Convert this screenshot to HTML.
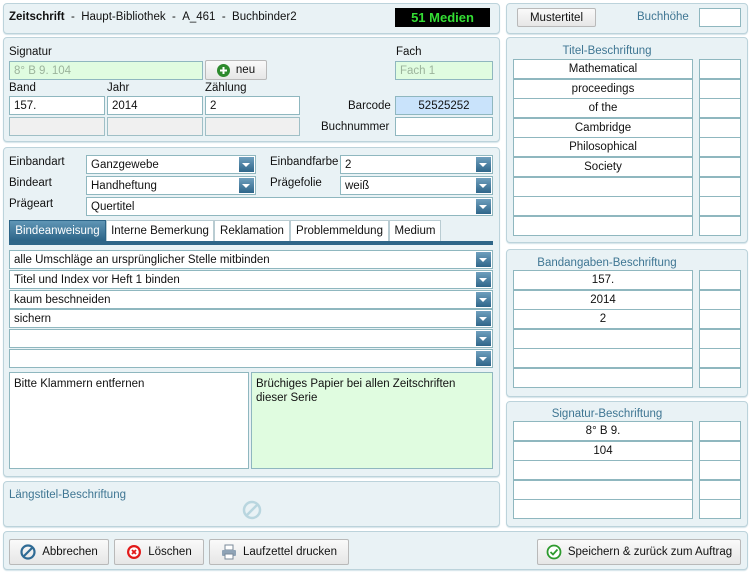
<!DOCTYPE html>
<html><head><meta charset="utf-8"><style>
*{box-sizing:border-box;margin:0;padding:0}
body{width:750px;height:572px;background:#fff;font-family:"Liberation Sans",sans-serif;font-size:11.5px;color:#111;position:relative;overflow:hidden}
.a{position:absolute}
.p{position:absolute;background:#e9f2f5;border:1px solid #bcd3db;border-radius:4px;box-shadow:0 1px 1px #d4e3e8}
.i{position:absolute;background:#fff;border:1px solid #8fb7bf;height:19px;line-height:18px;padding-left:4px;font-size:11.5px;white-space:nowrap;overflow:hidden}
.g{background:#f0f0f0;border-color:#9fbfc6}
.gr{background:#e0fce0;color:#9bb39b}
.l{position:absolute;font-size:11.5px}
.s::after{content:"";position:absolute;right:1px;top:1px;width:15px;height:15px;background:linear-gradient(#6f9fbd,#2f668a)}
.s::before{content:"";position:absolute;right:5px;top:7px;border-left:4px solid transparent;border-right:4px solid transparent;border-top:4px solid #fff;z-index:2}
.b{position:absolute;background:linear-gradient(#fafafa,#e6e6e6);border:1px solid #b9b9b9;border-radius:2px;font-size:11.5px;display:flex;align-items:center;justify-content:center;gap:6px}
.t{position:absolute;height:21px;line-height:21px;background:#fff;border:1px solid #b9ccd2;border-bottom:none;font-size:11.5px;text-align:center}
.c{position:absolute;background:#fff;border:1px solid #8fb7bf;text-align:center;font-size:11.5px;line-height:18px}
.h{position:absolute;color:#3f7693;font-size:11.5px;text-align:center}
</style></head><body>
<div class="p" style="left:3px;top:3px;width:497px;height:31px"></div>
<div class="l" style="left:9px;top:11px"><b>Zeitschrift</b> &nbsp;- &nbsp;Haupt-Bibliothek &nbsp;- &nbsp;A_461 &nbsp;- &nbsp;Buchbinder2</div>
<div class="a" style="left:395px;top:8px;width:95px;height:19px;background:#000;color:#33dd33;font-weight:bold;font-size:13px;text-align:center;line-height:19px">51 Medien</div>
<div class="p" style="left:3px;top:37px;width:497px;height:105px"></div>
<div class="l" style="left:9px;top:46px">Signatur</div>
<div class="i gr" style="left:9px;top:61px;width:194px">8° B 9. 104</div>
<div class="b" style="left:205px;top:60px;width:62px;height:20px"><svg width="13" height="13"><circle cx="6.5" cy="6.5" r="6.5" fill="#2d8a2d"/><path d="M6.5 3v7M3 6.5h7" stroke="#fff" stroke-width="2"/></svg>neu</div>
<div class="l" style="left:396px;top:46px">Fach</div>
<div class="i gr" style="left:395px;top:61px;width:98px">Fach 1</div>
<div class="l" style="left:9px;top:82px">Band</div>
<div class="l" style="left:107px;top:82px">Jahr</div>
<div class="l" style="left:205px;top:82px">Zählung</div>
<div class="i" style="left:9px;top:96px;width:96px">157.</div>
<div class="i" style="left:107px;top:96px;width:96px">2014</div>
<div class="i" style="left:205px;top:96px;width:95px">2</div>
<div class="i g" style="left:9px;top:117px;width:96px"></div>
<div class="i g" style="left:107px;top:117px;width:96px"></div>
<div class="i g" style="left:205px;top:117px;width:95px"></div>
<div class="l" style="left:348px;top:100px">Barcode</div>
<div class="i" style="left:395px;top:96px;width:98px;background:#c9e3fb;text-align:center;padding:0">52525252</div>
<div class="l" style="left:321px;top:121px">Buchnummer</div>
<div class="i" style="left:395px;top:117px;width:98px"></div>
<div class="p" style="left:3px;top:147px;width:497px;height:330px"></div>
<div class="l" style="left:9px;top:156px">Einbandart</div>
<div class="i s" style="left:86px;top:155px;width:170px">Ganzgewebe</div>
<div class="l" style="left:270px;top:156px">Einbandfarbe</div>
<div class="i s" style="left:340px;top:155px;width:153px">2</div>
<div class="l" style="left:9px;top:177px">Bindeart</div>
<div class="i s" style="left:86px;top:176px;width:170px">Handheftung</div>
<div class="l" style="left:270px;top:177px">Prägefolie</div>
<div class="i s" style="left:340px;top:176px;width:153px">weiß</div>
<div class="l" style="left:9px;top:198px">Prägeart</div>
<div class="i s" style="left:86px;top:197px;width:407px">Quertitel</div>
<div class="t" style="left:9px;top:220px;width:97px;background:linear-gradient(#5f95b5,#2c6487);color:#fff;border-color:#2c6487">Bindeanweisung</div>
<div class="t" style="left:106px;top:220px;width:108px">Interne Bemerkung</div>
<div class="t" style="left:214px;top:220px;width:76px">Reklamation</div>
<div class="t" style="left:290px;top:220px;width:99px">Problemmeldung</div>
<div class="t" style="left:389px;top:220px;width:52px">Medium</div>
<div class="a" style="left:9px;top:241px;width:484px;height:4px;background:#2f6688"></div>
<div class="i s" style="left:9px;top:250px;width:484px">alle Umschläge an ursprünglicher Stelle mitbinden</div>
<div class="i s" style="left:9px;top:270px;width:484px">Titel und Index vor Heft 1 binden</div>
<div class="i s" style="left:9px;top:290px;width:484px">kaum beschneiden</div>
<div class="i s" style="left:9px;top:309px;width:484px">sichern</div>
<div class="i s" style="left:9px;top:329px;width:484px"></div>
<div class="i s" style="left:9px;top:349px;width:484px"></div>
<div class="i" style="left:9px;top:372px;width:240px;height:97px;white-space:normal;line-height:14px;padding-top:4px">Bitte Klammern entfernen</div>
<div class="i" style="left:251px;top:372px;width:242px;height:97px;white-space:normal;line-height:14px;padding-top:4px;padding-right:30px;background:#e0fce0">Brüchiges Papier bei allen Zeitschriften dieser Serie</div>
<div class="p" style="left:3px;top:481px;width:497px;height:46px"></div>
<div class="l" style="left:9px;top:489px;color:#3f7693">Längstitel-Beschriftung</div>
<svg class="a" style="left:242px;top:500px" width="20" height="20"><circle cx="10" cy="10" r="8" fill="none" stroke="#b9d6df" stroke-width="2.5"/><path d="M5 15L15 5" stroke="#b9d6df" stroke-width="2.5"/></svg>
<div class="p" style="left:506px;top:3px;width:242px;height:31px"></div>
<div class="b" style="left:517px;top:8px;width:79px;height:19px">Mustertitel</div>
<div class="l" style="left:637px;top:11px;color:#3f7693">Buchhöhe</div>
<div class="i" style="left:699px;top:8px;width:42px"></div>
<div class="p" style="left:506px;top:37px;width:242px;height:206px"></div>
<div class="h" style="left:517px;top:45px;width:180px">Titel-Beschriftung</div>
<div class="p" style="left:506px;top:249px;width:242px;height:148px"></div>
<div class="h" style="left:517px;top:257px;width:180px">Bandangaben-Beschriftung</div>
<div class="p" style="left:506px;top:401px;width:242px;height:126px"></div>
<div class="h" style="left:517px;top:408px;width:180px">Signatur-Beschriftung</div>
<script>
function rows(y,n,vals){var h='';for(var k=0;k<n;k++){var yy=Math.round(y+k*19.6);h+='<div class="c" style="left:513px;top:'+yy+'px;width:180px;height:20px">'+(vals[k]||'')+'</div><div class="c" style="left:699px;top:'+yy+'px;width:42px;height:20px"></div>';}document.write(h);}
rows(59,9,["Mathematical","proceedings","of the","Cambridge","Philosophical","Society"]);
rows(270,6,["157.","2014","2"]);
rows(421,5,["8° B 9.","104"]);
</script>
<div class="p" style="left:3px;top:531px;width:745px;height:39px"></div>
<div class="b" style="left:9px;top:539px;width:100px;height:26px"><svg width="16" height="16"><circle cx="8" cy="8" r="6.5" fill="none" stroke="#2f6b95" stroke-width="2.2"/><path d="M4 12L12 4" stroke="#2f6b95" stroke-width="2.2"/></svg>Abbrechen</div>
<div class="b" style="left:114px;top:539px;width:90px;height:26px"><svg width="16" height="16"><circle cx="8" cy="8" r="7" fill="#e21a1a"/><circle cx="8" cy="8" r="4.8" fill="#fff"/><path d="M6 6l4 4M10 6l-4 4" stroke="#e21a1a" stroke-width="1.8"/></svg>Löschen</div>
<div class="b" style="left:209px;top:539px;width:140px;height:26px"><svg width="16" height="16"><rect x="4" y="1" width="8" height="5" fill="#fff" stroke="#7a8a99"/><rect x="1" y="6" width="14" height="6" rx="1" fill="#8fa3b6"/><rect x="4" y="10" width="8" height="5" fill="#fff" stroke="#7a8a99"/></svg>Laufzettel drucken</div>
<div class="b" style="left:537px;top:539px;width:204px;height:26px"><svg width="16" height="16"><circle cx="8" cy="8" r="6.5" fill="#fff" stroke="#2e9a2e" stroke-width="1.8"/><path d="M4.5 8l2.5 2.5 4.5-5" fill="none" stroke="#2e9a2e" stroke-width="1.8"/></svg>Speichern &amp; zurück zum Auftrag</div>
</body></html>
